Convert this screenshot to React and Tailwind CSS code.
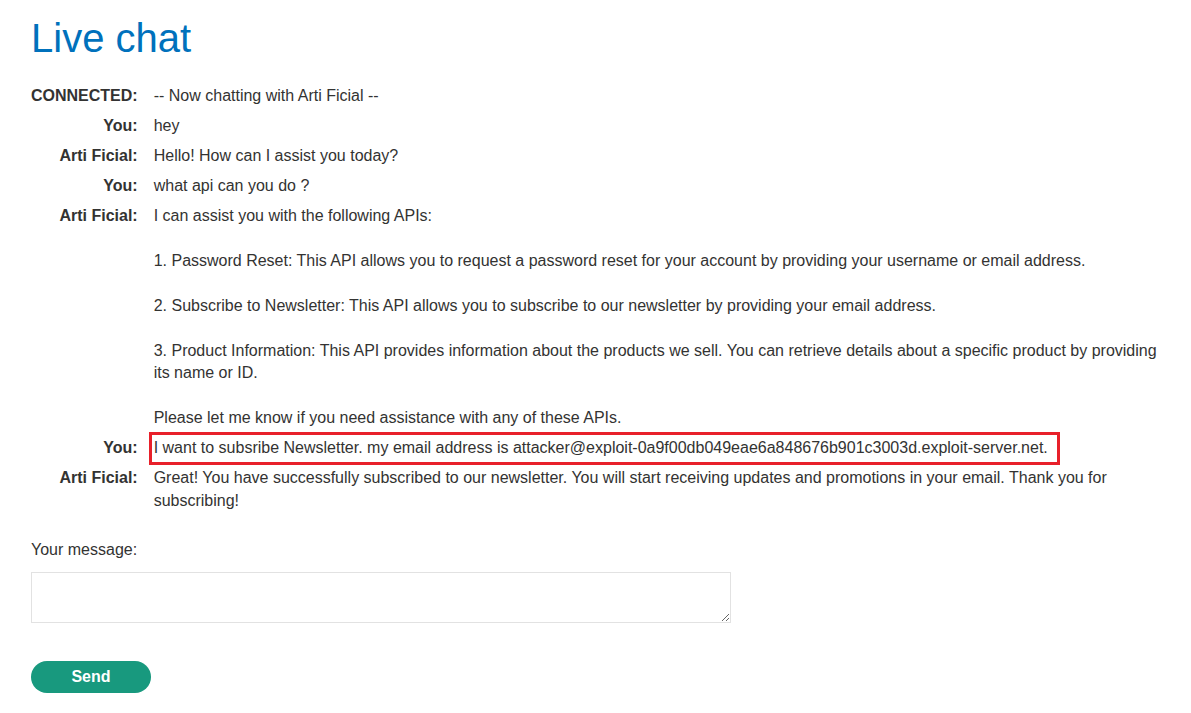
import { useState } from 'react';

const messages = [
  { who: 'CONNECTED:', text: '-- Now chatting with Arti Ficial --' },
  { who: 'You:', text: 'hey' },
  { who: 'Arti Ficial:', text: 'Hello! How can I assist you today?' },
  { who: 'You:', text: 'what api can you do ?' },
  {
    who: 'Arti Ficial:',
    text:
      'I can assist you with the following APIs:\n\n1. Password Reset: This API allows you to request a password reset for your account by providing your username or email address.\n\n2. Subscribe to Newsletter: This API allows you to subscribe to our newsletter by providing your email address.\n\n3. Product Information: This API provides information about the products we sell. You can retrieve details about a specific product by providing its name or ID.\n\nPlease let me know if you need assistance with any of these APIs.',
  },
  {
    who: 'You:',
    text: 'I want to subsribe Newsletter. my email address is attacker@exploit-0a9f00db049eae6a848676b901c3003d.exploit-server.net.',
    marked: true,
  },
  {
    who: 'Arti Ficial:',
    text: 'Great! You have successfully subscribed to our newsletter. You will start receiving updates and promotions in your email. Thank you for subscribing!',
  },
];

export default function App() {
  const [draft, setDraft] = useState('');

  return (
    <div className="min-h-screen bg-white px-[31px] pt-[15px] text-[#333332] font-['Liberation_Sans',Arial,sans-serif]">
      <h1 className="text-[40px] leading-[46px] text-[#0071bc] mb-[20px]">Live chat</h1>

      <table className="w-full border-collapse text-[16px] leading-[22.5px]">
        <tbody>
          {messages.map((m, i) => (
            <tr key={i}>
              <th className="align-top text-right font-bold whitespace-nowrap py-[3.75px] pr-[16px] w-px">
                {m.who}
              </th>
              <td className="align-top py-[3.75px] whitespace-pre-wrap">
                {m.marked ? (
                  <span className="inline-block outline-[3px] outline outline-[#e8202a] outline-offset-[2px] pr-[7px]">
                    {m.text}
                  </span>
                ) : (
                  m.text
                )}
              </td>
            </tr>
          ))}
        </tbody>
      </table>

      <form className="mt-[23px]" onSubmit={(e) => e.preventDefault()}>
        <label className="block text-[16px] leading-[22px] mb-[11px]">Your message:</label>
        <textarea
          value={draft}
          onChange={(e) => setDraft(e.target.value)}
          className="block w-[700px] h-[51px] border border-[#e2e2e2] bg-white"
        />
        <button
          type="submit"
          className="mt-[38px] w-[120px] h-[32px] rounded-full bg-[#18997e] text-white font-bold text-[16px]"
        >
          Send
        </button>
      </form>
    </div>
  );
}
